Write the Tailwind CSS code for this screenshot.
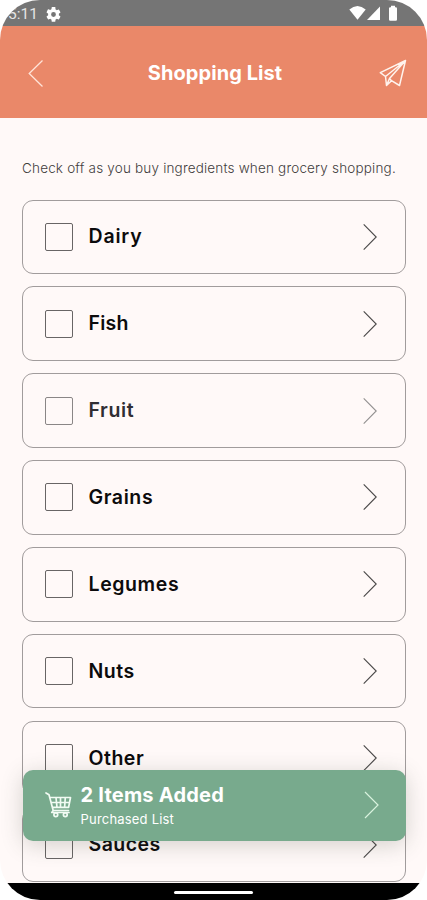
<!DOCTYPE html>
<html lang="en">
<head>
  <meta charset="UTF-8">
  <title>Shopping List</title>
  <script src="https://cdn.jsdelivr.net/npm/@tailwindcss/browser@4"></script>
</head>
<body class="bg-white font-['Inter',sans-serif]">
  <div class="relative w-[427px] h-[900px] overflow-hidden rounded-[40px] bg-[#fff9f8] flex flex-col">
    <!-- status bar -->
    <div class="h-[26px] shrink-0 bg-[#757575] flex items-center justify-between pl-[8px] pr-[29px] text-white">
      <div class="flex items-center gap-[9px]">
        <span class="font-[Roboto] text-[15.5px] leading-none text-[#e4e4e4] w-[29px] pt-[3px] whitespace-nowrap">5:11</span>
        <svg class="size-[15px] mt-[2px]" viewBox="2 2 20 20" fill="currentColor"><path d="M19.14 12.94c.04-.3.06-.61.06-.94s-.02-.64-.07-.94l2.03-1.58a.49.49 0 0 0 .12-.61l-1.92-3.32a.49.49 0 0 0-.59-.22l-2.39.96c-.5-.38-1.03-.7-1.62-.94l-.36-2.54A.48.48 0 0 0 13.92 2h-3.84a.48.48 0 0 0-.47.41l-.36 2.54c-.59.24-1.13.57-1.62.94l-2.39-.96a.48.48 0 0 0-.59.22L2.74 8.87c-.12.21-.08.47.12.61l2.03 1.58c-.05.3-.09.63-.09.94s.02.64.07.94l-2.03 1.58a.49.49 0 0 0-.12.61l1.92 3.32c.12.22.37.29.59.22l2.39-.96c.5.38 1.03.7 1.62.94l.36 2.54c.05.24.24.41.48.41h3.84c.24 0 .44-.17.47-.41l.36-2.54c.59-.24 1.13-.56 1.62-.94l2.39.96c.22.08.47 0 .59-.22l1.92-3.32a.49.49 0 0 0-.12-.61zM12 15.2a3.2 3.2 0 1 1 0-6.4 3.2 3.2 0 0 1 0 6.4z"/></svg>
      </div>
      <svg class="w-[49px] h-[16px]" viewBox="0 0 49 16" fill="currentColor">
        <path d="M.3 4.400Q8.500-2.600 16.700 4.400L8.500 14.800Z"/>
        <path d="M31 1.500V15H18Z"/>
        <path d="M42 .8h4v1.500h.8q1.200 0 1.200 1.200v11q0 1.200-1.200 1.200h-5.600q-1.200 0-1.200-1.200v-11q0-1.200 1.200-1.200H42Z"/>
      </svg>
    </div>

    <header class="h-[92px] shrink-0 bg-[#ea8869] flex items-center justify-between pl-[28px] pr-[20px] text-white">
      <svg class="w-[16px] h-[28px] mt-px" viewBox="0 0 16 28" fill="none" stroke="#ffe3d8" stroke-width="1.300"><path d="M14.500 1.500 1.200 14.500 14.500 27.500"/></svg>
      <h1 class="text-[20px] font-bold tracking-[0.080px] leading-6 pl-[7px] pt-px whitespace-nowrap">Shopping List</h1>
      <svg class="size-[28px] mt-[2px]" viewBox="0 0 28 28" fill="none" stroke="#fff3ed" stroke-width="1.500" stroke-linejoin="round"><path d="M26.500 1.500 1.300 13.600 6.500 17.500 7.500 26.500 12.500 21.700 20.500 26.500ZM26.500 1.500 6.500 17.500M26.500 1.500 10.500 19.500 7.500 26.500M10.500 19.500 12.500 21.700"/></svg>
    </header>

    <p class="mt-[39px] ml-[22px] h-[22px] shrink-0 text-[13.500px] font-light leading-[22px] tracking-[0.180px] text-[#3f3d3d] whitespace-nowrap">Check off as you buy ingredients when grocery shopping.</p>

    <ul id="list" class="mt-[20.500px] ml-[22px] mr-[21px] flex flex-col gap-[12.400px]"></ul>

    <!-- purchased banner -->
    <a class="absolute left-[22.500px] top-[769.500px] w-[383.500px] h-[71px] rounded-[10px] bg-[#78aa8d] shadow-[0_4px_22px_rgba(60,70,55,0.22)] flex items-center pl-[22px] pr-[27px] text-white">
      <svg class="w-[27px] h-[26px]" viewBox="0 0 27 26" fill="none" stroke="#f1fbf3" stroke-width="1.700" stroke-linecap="round" stroke-linejoin="round">
        <path d="M1 1 4 2.800 8.200 18.500H23.500M5 5.500H25.500L23.600 15.300H7.500M6.300 10.500H24.500M11 5.500 12 15.300M15.500 5.500V15.300M20.300 5.500 19.600 15.300M8.200 18.500 6.800 20.500H24"/>
        <circle cx="10.800" cy="22.800" r="1.900"/><circle cx="20.300" cy="22.800" r="1.900"/>
      </svg>
      <div class="flex flex-col pl-[9px] pt-[3px] grow">
        <span class="text-[20px] font-bold leading-[26px] tracking-[0.220px] whitespace-nowrap">2 Items Added</span>
        <span class="text-[13px] leading-[23px] tracking-[0.200px] whitespace-nowrap">Purchased List</span>
      </div>
      <svg class="w-[15px] h-[28px]" viewBox="0 0 15 28" fill="none" stroke="#d9f3de" stroke-width="1.200"><path d="M1 1 14 14 1 27"/></svg>
    </a>

    <!-- navigation bar -->
    <div class="absolute inset-x-0 bottom-0 h-[17px] bg-black flex justify-center">
      <div class="mt-[8px] w-[79px] h-[3px] rounded-full bg-white"></div>
    </div>
  </div>

  <script>
    const items = [
      { name: 'Dairy', track: 'tracking-[0.800px]' },
      { name: 'Fish', track: 'tracking-[0.250px]' },
      { name: 'Fruit', track: 'tracking-[0.600px]', pressed: true },
      { name: 'Grains', track: 'tracking-[0.600px]' },
      { name: 'Legumes', track: 'tracking-[0.600px]' },
      { name: 'Nuts', track: 'tracking-[0.550px]' },
      { name: 'Other', track: 'tracking-[0.500px]' },
      { name: 'Sauces', track: 'tracking-[0.450px]' },
    ];
    document.getElementById('list').innerHTML = items.map(item => `
      <li class="h-[74.500px] shrink-0 rounded-[11px] border border-[#a19c9c] flex items-center pl-[21.500px] pr-[28px]">
        <span class="size-[28px] rounded-[2px] border ${item.pressed ? 'border-[#8a8686]' : 'border-[#686565]'}"></span>
        <span class="pl-[16px] pb-px grow text-[19.500px] font-semibold leading-7 ${item.track} ${item.pressed ? 'text-[#302e33]' : 'text-[#0c0b0c]'}">${item.name}</span>
        <svg class="w-[14px] h-[28px] ${item.pressed ? 'text-[#929090]' : 'text-[#4a4848]'}" viewBox="0 0 14 28" fill="none" stroke="currentColor" stroke-width="1.100"><path d="M.7 1.300 13.200 14 .7 26.700"/></svg>
      </li>
    `).join('');
  </script>
</body>
</html>
